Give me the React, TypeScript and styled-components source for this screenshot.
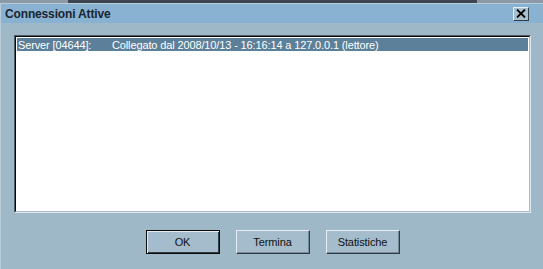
import React from "react";
import styled, { createGlobalStyle } from "styled-components";

const Global = createGlobalStyle`
  html, body { margin: 0; padding: 0; background: #4b5660; }
  body { width: 543px; height: 269px; overflow: hidden; }
`;

const Frame = styled.div`
  width: 543px;
  height: 269px;
  display: flex;
  flex-direction: column;
  background: #4b5660;
  font-family: Tahoma, "DejaVu Sans", "Liberation Sans", sans-serif;
`;

const TopStrip = styled.div`
  height: 3px;
  display: flex;
`;

const StripSeg = styled.div<{ $w: number; $c: string }>`
  width: ${(p) => p.$w}px;
  flex: ${(p) => (p.$w === 0 ? 1 : "none")};
  background: ${(p) => p.$c};
`;

const Window = styled.div`
  flex: 1;
  display: flex;
  flex-direction: column;
  background: #9fb8c8;
  border-left: 1px solid #b8ccd9;
  border-top: 1px solid #b8ccd9;
`;

const TitleBar = styled.div`
  height: 19px;
  display: flex;
  align-items: center;
  justify-content: space-between;
  padding: 0 14px 0 4px;
  background: #89b1d1;
`;

const Title = styled.span`
  font-family: "Liberation Sans", Arial, sans-serif;
  font-weight: bold;
  font-size: 12px;
  letter-spacing: -0.15px;
  color: #1a2630;
`;

const CloseButton = styled.div`
  width: 16px;
  height: 14px;
  box-sizing: border-box;
  background: #a9c0cf;
  border: 1px solid;
  border-color: #e4eef4 #33404a #33404a #e4eef4;
  display: flex;
  align-items: center;
  justify-content: center;
`;

const Body = styled.div`
  flex: 1;
  display: flex;
  flex-direction: column;
  padding: 12px 12px 0 13px;
`;

const ListBox = styled.div`
  height: 178px;
  box-sizing: border-box;
  background: #ffffff;
  border: 1px solid;
  border-color: #4c5b66 #dde8ef #dde8ef #4c5b66;
`;

const ListInner = styled.div`
  height: 100%;
  box-sizing: border-box;
  border: 1px solid;
  border-color: #0a0a0a #a8bccb #a8bccb #0a0a0a;
  padding: 1px 1px;
`;

const Row = styled.div<{ $selected?: boolean }>`
  height: 13px;
  display: flex;
  align-items: center;
  background: ${(p) => (p.$selected ? "#5c8099" : "transparent")};
  color: ${(p) => (p.$selected ? "#ffffff" : "#000")};
  font-family: "Liberation Sans", Arial, sans-serif;
  font-size: 11px;
  letter-spacing: -0.13px;
  white-space: nowrap;
`;

const Cell = styled.span<{ $w?: number }>`
  width: ${(p) => (p.$w ? `${p.$w}px` : "auto")};
  padding-left: 1px;
  flex: none;
`;

const ButtonRow = styled.div`
  display: flex;
  justify-content: center;
  gap: 16px;
  padding: 17px 0 0 0;
`;

const Button = styled.button<{ $default?: boolean }>`
  width: 74px;
  height: 24px;
  box-sizing: border-box;
  margin: 0;
  padding: 0;
  background: #a4bccc;
  font-family: "Liberation Sans", Arial, sans-serif;
  font-size: 11px;
  letter-spacing: -0.1px;
  color: #111;
  border: 1px solid;
  border-color: ${(p) =>
    p.$default ? "#0a0a0a" : "#e6eef3 #2e3a44 #2e3a44 #e6eef3"};
  box-shadow: ${(p) =>
    p.$default
      ? "inset 1px 1px 0 #e6eef3, inset -1px -1px 0 #2e3a44"
      : "inset -1px -1px 0 #74899a"};
`;

export default function App() {
  return (
    <Frame>
      <Global />
      <TopStrip>
        <StripSeg $w={68} $c="#8b9aa6" />
        <StripSeg $w={409} $c="#3b4650" />
        <StripSeg $w={0} $c="#8b9aa6" />
      </TopStrip>
      <Window>
        <TitleBar>
          <Title>Connessioni Attive</Title>
          <CloseButton>
            <svg width="10" height="9" viewBox="0 0 10 9">
              <path d="M1 0.5 L9 8.5 M9 0.5 L1 8.5" stroke="#000" strokeWidth="1.8" />
            </svg>
          </CloseButton>
        </TitleBar>
        <Body>
          <ListBox>
            <ListInner>
              <Row $selected>
                <Cell $w={93}>Server [04644]:</Cell>
                <Cell>Collegato dal 2008/10/13 - 16:16:14 a 127.0.0.1 (lettore)</Cell>
              </Row>
            </ListInner>
          </ListBox>
          <ButtonRow>
            <Button $default>OK</Button>
            <Button>Termina</Button>
            <Button>Statistiche</Button>
          </ButtonRow>
        </Body>
      </Window>
    </Frame>
  );
}
